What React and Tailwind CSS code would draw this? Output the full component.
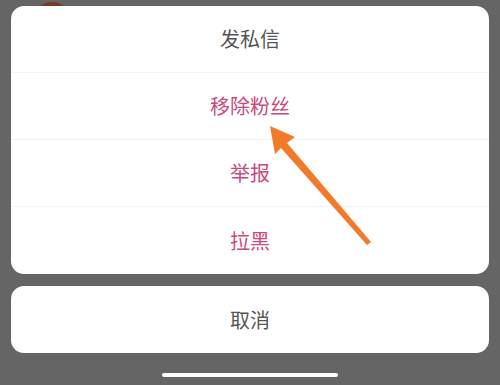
import React from 'react';

const rows = [
  { label: '发私信', tone: 'text-[#555555]' },
  { label: '移除粉丝', tone: 'text-[#c94a7c]' },
  { label: '举报', tone: 'text-[#c94a7c]' },
  { label: '拉黑', tone: 'text-[#c94a7c]' },
];

export default function App() {
  return (
    <div
      className="relative w-[500px] h-[385px] overflow-hidden bg-[#656565]"
      style={{ fontFamily: '"Noto Sans CJK SC", "Noto Sans", sans-serif' }}
    >
      {/* avatar peeking from behind */}
      <div className="absolute left-[33px] top-[2px] w-[38px] h-[38px] rounded-full bg-[#7c3822]" />

      <div className="relative flex flex-col px-[11px] pt-[6px]">
        {/* action sheet */}
        <div className="flex flex-col bg-white rounded-[13px] overflow-hidden">
          {rows.map((r, i) => (
            <div
              key={r.label}
              className={`h-[67px] flex items-center justify-center text-[20px] ${r.tone} ${
                i < rows.length - 1 ? 'border-b border-[#f3f3f3]' : ''
              }`}
            >
              {r.label}
            </div>
          ))}
        </div>

        {/* cancel */}
        <div className="mt-[12px] h-[67px] flex items-center justify-center bg-white rounded-[13px] text-[20px] text-[#555555]">
          取消
        </div>

        {/* home indicator */}
        <div className="flex justify-center mt-[20px]">
          <div className="w-[176px] h-[4px] rounded-full bg-white" />
        </div>
      </div>

      {/* annotation arrow */}
      <svg className="absolute left-0 top-0" width="500" height="385" viewBox="0 0 500 385">
        <polygon
          points="270,126 295,137 287,143 371,242 367,245 281,148 275,154"
          fill="#f47a2b"
        />
      </svg>
    </div>
  );
}
